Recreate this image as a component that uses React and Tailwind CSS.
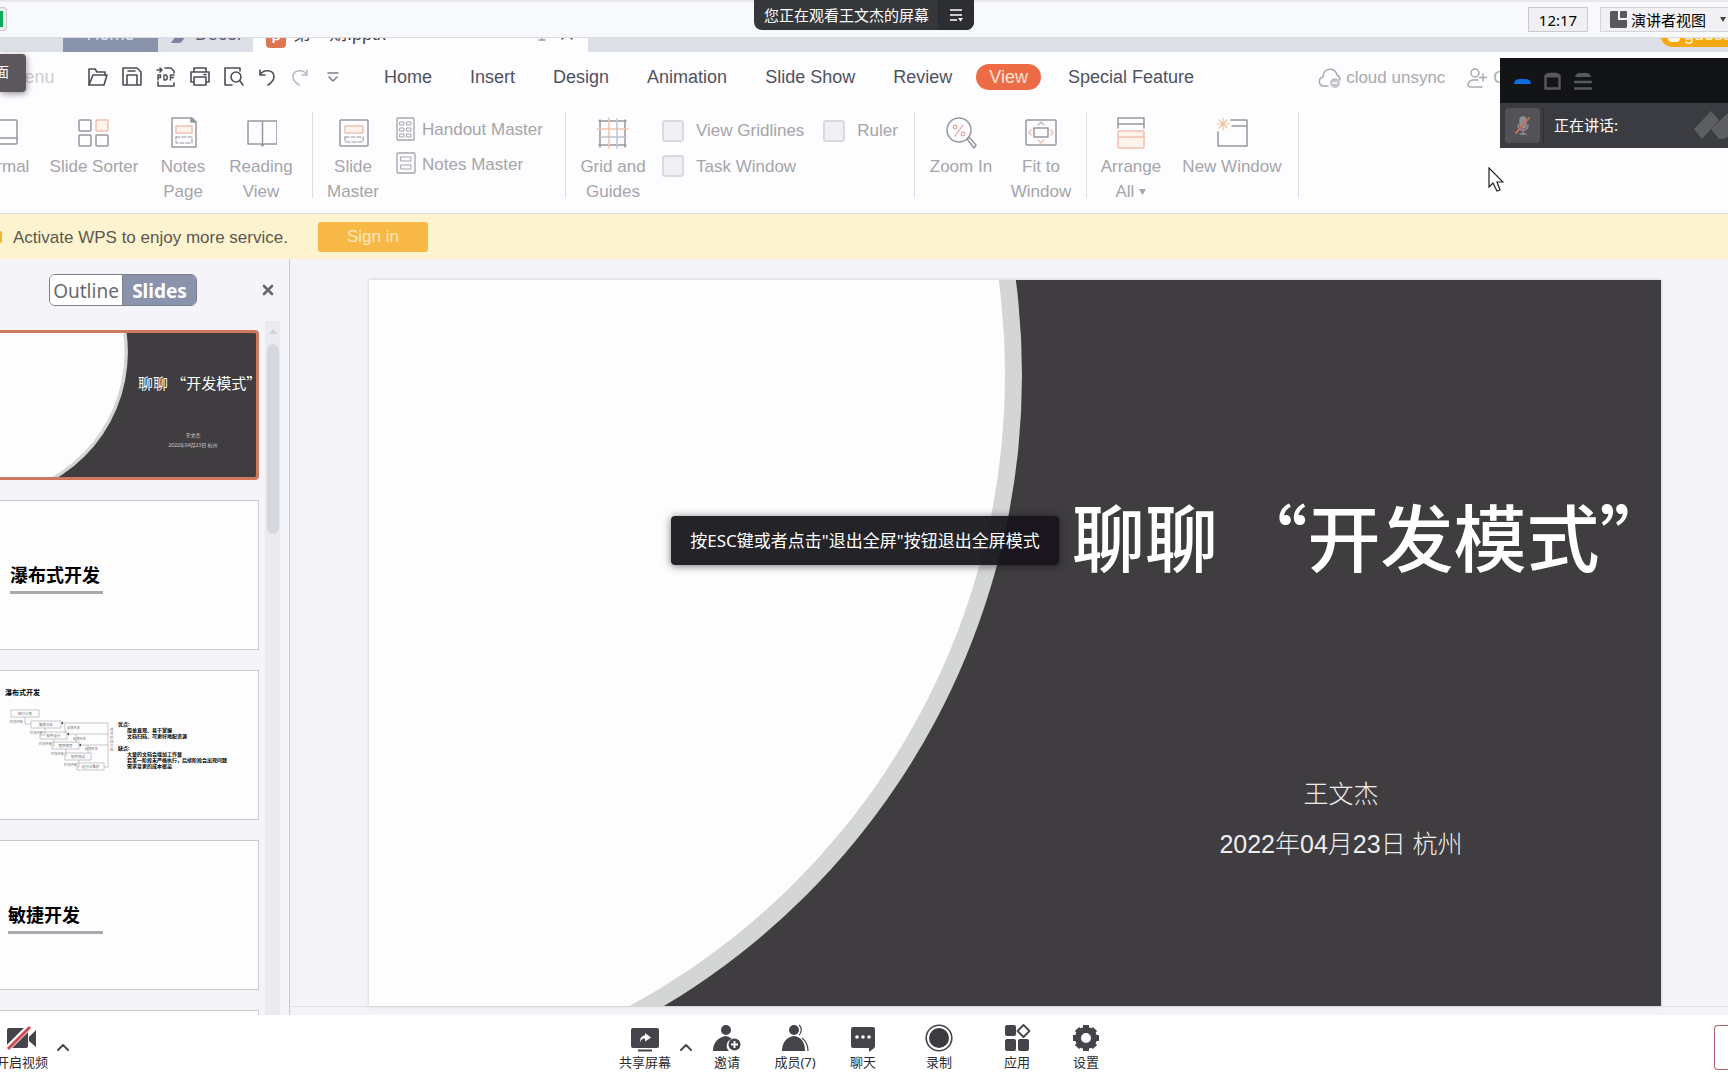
import React from "react";

const sans = "font-['Liberation_Sans','Noto_Sans_CJK_SC',sans-serif]";
const cjk = "font-['Noto_Sans','Noto_Sans_CJK_SC',sans-serif]";
const cjkOnly = "font-['Noto_Sans_CJK_SC',sans-serif]";

const MENU_ITEMS = ["Home", "Insert", "Design", "Animation", "Slide Show", "Review", "View", "Special Feature"];

function Svg({ w = 20, h = 20, sw = 1.6, className = "", children }) {
  return (
    <svg width={w} height={h} viewBox={`0 0 ${w} ${h}`} fill="none" stroke="currentColor" strokeWidth={sw} strokeLinejoin="round" strokeLinecap="round" className={className} aria-hidden="true">
      {children}
    </svg>
  );
}

/* ---------- meeting header ---------- */

function MeetingHeader() {
  return (
    <header className={`relative flex h-[38px] shrink-0 items-start justify-end gap-3 border-t-2 border-b border-t-[#e9e7ec] border-b-[#dcdce0] bg-[#f8f9fc] pt-[5px] ${cjk}`}>
      <div className="absolute top-[5px] left-0 flex h-6 w-[7px] items-center rounded-r-sm border border-l-0 border-[#c9cace] bg-[#eeeef1]">
        <span className="h-4 w-[3px] bg-[#0cab5c]" />
      </div>
      <div className="absolute -top-0.5 left-[754px] flex h-[30px] w-[220px] items-center overflow-hidden rounded-b-lg bg-[#35373b] text-[15px] leading-5 text-white">
        <span className="flex-1 pl-2.5 whitespace-nowrap">您正在观看王文杰的屏幕</span>
        <button aria-label="选项" className="flex h-full w-9 items-center justify-center bg-[#2c2e32]">
          <Svg w={14} h={14} sw={1.5}>
            <path d="M1 2h12M1 7h12M1 12h7" strokeLinecap="butt" />
            <path d="M9 10h5l-2.500 3.500z" fill="currentColor" stroke="none" />
          </Svg>
        </button>
      </div>
      <time className="flex h-[25px] w-[60px] items-center justify-center border border-[#c9cace] bg-[#f0f0f3] text-[15px] leading-5 text-black">12:17</time>
      <button className="flex h-[25px] w-32 items-center gap-1 border border-r-0 border-[#d4d5d9] bg-[#f1f1f4] pl-[9px] text-[15px] leading-5 whitespace-nowrap text-black">
        <svg width="17" height="17" viewBox="0 0 17 17" fill="#58595d" aria-hidden="true">
          <path d="M1 0h7v9h9v7l-1 1H1l-1-1V1z" />
          <rect x="10" y="0" width="7" height="7" rx="1" />
        </svg>
        <span>演讲者视图</span>
        <svg width="7" height="5" viewBox="0 0 7 5" fill="#444" className="ml-2.5 shrink-0" aria-hidden="true"><path d="M0 0h6L3 5z" /></svg>
      </button>
    </header>
  );
}

/* ---------- WPS document tabs ---------- */

function TabStrip() {
  return (
    <div className={`flex h-[14px] shrink-0 items-end overflow-hidden bg-[#dcdfe6] text-lg ${sans}`}>
      <div className="flex h-9 w-full items-stretch leading-9">
        <button className="ml-[63px] w-[95px] bg-[#8a93ac] text-center text-[#e3e5ee]">Home</button>
        <button className="flex w-[95px] items-center gap-2 pl-[13px] text-[#5b6075]">
          <svg width="16" height="18" viewBox="0 0 16 18" fill="#7c83a0" aria-hidden="true"><path d="M4 0h6q10 9-1 18H0l4-6z" /></svg>
          <span>Docer</span>
        </button>
        <button className="flex w-[335px] items-center bg-[#fdfcfe] pl-[13px] text-[#45454f]">
          <span className="mt-2 flex h-5 w-5 items-center justify-center rounded-sm bg-[#dd7650] text-[13px] leading-none font-bold text-white">P</span>
          <span className="ml-[7px] flex-1 text-left">第一期.pptx</span>
          <Svg w={14} h={14} sw={1.3} className="mr-3 text-[#9a9aa2]"><path d="M1 1h12v8H1zM7 9v4M4 13h6" /></Svg>
          <Svg w={12} h={12} sw={1.6} className="mr-[15px] text-[#5b5b64]"><path d="M1 1l10 10M11 1L1 11" /></Svg>
        </button>
        <button className="pl-[19px] text-[#6b6b75]" aria-label="New tab">+</button>
        <button className="mt-[5px] ml-auto flex h-[26px] w-[68px] items-center gap-1 rounded-l-full bg-[#f7a910] pl-2 leading-6 text-[#fff6df]">
          <span className="h-4 w-[14px] rounded-b bg-[#fff6df]" />guest
        </button>
      </div>
    </div>
  );
}

/* ---------- quick access + menu ---------- */

const QUICK = [
  ["Open", "text-[#4c4d57]", <><path d="M1 18V2h6l2 3h8v3" /><path d="M1 18L5 8h14l-3 10z" /></>],
  ["Save", "text-[#4c4d57]", <><path d="M1 1h14l4 4v13H1zM5 18V8h10v10M6 4h7" /></>],
  ["Export PDF", "text-[#4c4d57]", <><path d="M9 1h6l3 3v2M2 15v4h16v-3M1 3h5M4 1l2 2-2 2" /><path d="M2 13V8h2.500v2.500H2M8 8h1c3 0 3 5 0 5H8zM14.500 13V8H18M14.500 10.500h3" strokeWidth="1.400" /></>],
  ["Print", "text-[#4c4d57]", <><path d="M4 5V1h12v4M4 15H1V5h18v10h-3" /><path d="M4 10h12v8H4zM14 7.500h2" /></>],
  ["Preview", "text-[#4c4d57]", <><path d="M8 18H1V1h15v3" /><circle cx="12" cy="10" r="5" /><path d="M16 14l3 4" /></>],
  ["Undo", "text-[#4c4d57]", <><path d="M2 3v5h5M2 8c3-6 14-6 14 2 0 3-3 6-6 8" /></>],
  ["Redo", "text-[#b9b9c0]", <><path d="M15 3v5h-5M15 8C12 2 1 2 1 10c0 3 3 6 6 8" /></>],
  ["More", "text-[#7f7f88]", <><path d="M2 6h10M3 10l4 4 4-4" /></>],
];

function MenuBar() {
  return (
    <div className={`flex h-[50px] shrink-0 items-center overflow-hidden pl-2 text-lg text-[#50525f] ${sans}`}>
      <button className="w-12 text-[#cfcdd2]">Menu</button>
      <div className="ml-8 flex shrink-0 items-center gap-[14px]">
        {QUICK.map(([name, color, icon]) => (
          <button key={name} aria-label={name} className={`h-5 w-5 ${color}`}><Svg>{icon}</Svg></button>
        ))}
      </div>
      <nav className="ml-[38px] flex shrink-0 items-center gap-[38px] whitespace-nowrap">
        {MENU_ITEMS.map((m) => (
          <button key={m} className={m === "View" ? "-mr-[11px] -ml-[14px] h-[26px] rounded-full bg-[#ee6c45] px-[13px] leading-[26px] text-[#fde3d8]" : ""}>{m}</button>
        ))}
      </nav>
      <div className="ml-auto flex shrink-0 items-center pt-0.5 pr-[194px] text-[17px] whitespace-nowrap text-[#a9a9ae]">
        <button className="flex items-center gap-1">
          <Svg w={24} h={22} sw={1.5}>
            <path d="M10 19H6C0 19 0 11 5 10 5 0 18 0 19 8c2 1 3 3 3 5" />
            <circle cx="17" cy="16" r="5" fill="#c6c6ca" stroke="none" /><path d="M15 16h4" stroke="#fff" />
          </Svg>
          cloud unsync
        </button>
        <button className="ml-[22px] flex items-center gap-1.5">
          <Svg w={20} h={22} sw={1.5}><circle cx="8" cy="6" r="4" /><path d="M11 13H6c-3 0-5 3-5 5 0 2 1 2 3 2h11M16 7v7M12.500 10.500h7" /></Svg>
          Coop
        </button>
      </div>
    </div>
  );
}

/* ---------- ribbon ---------- */

const P = "#f0c2ae";
const PF = "#fff3ec";
const ICONS = {
  normal: <><rect x="1" y="3" width="30" height="24" rx="1" /><path d="M1 21h30" /></>,
  sorter: <><rect x="1" y="3" width="12" height="11" rx="1" /><rect x="18" y="3" width="12" height="11" rx="1" stroke={P} fill={PF} /><rect x="1" y="18" width="12" height="11" rx="1" /><rect x="18" y="18" width="12" height="11" rx="1" /></>,
  notes: <><path d="M5 1h20l4 4v25H5z" /><path d="M24 1v4h5z" fill="currentColor" /><rect x="9" y="9" width="16" height="7" stroke={P} fill={PF} /><rect x="9" y="20" width="16" height="6" strokeDasharray="4 2" strokeWidth="1" /></>,
  reading: <><path d="M3 4h29v23H19l-1.500 2-1.500-2H3zM17.500 4v23" /></>,
  master: <><rect x="3" y="3" width="28" height="26" rx="1" /><rect x="8" y="9" width="18" height="7" stroke={P} fill={PF} /><rect x="8" y="20" width="18" height="5" strokeDasharray="4 2" strokeWidth="1" /></>,
  grid: <><path d="M2 4h27M2 28h27M3 3v27M28 3v27" /><path d="M0 12h31M12 1v30" stroke={P} /><path d="M2 20h27M20 2v29" stroke="#bfc3cf" /></>,
  zoom: <><circle cx="14" cy="13" r="12" /><path d="M22 22l2-2 7 8-2 3z" /><g stroke="#e3a79a" strokeWidth="1.200"><path d="M18 8l-8 11" /><circle cx="10" cy="10" r="1.800" /><circle cx="18" cy="17" r="1.800" /></g></>,
  fit: <><rect x="1" y="3" width="30" height="25" rx="1" /><rect x="9" y="11" width="14" height="9" /><path d="M13 8l3-3 3 3" stroke="#bfc3cf" /><path d="M13 23l3 3 3-3M6 13l-2 2.500L6 18M26 13l2 2.500-2 2.500" stroke={P} /></>,
  arrange: <><path d="M3 11V1h26v10M3 7h26" /><g stroke={P} fill={PF}><rect x="3" y="14" width="26" height="17" rx="1" /><path d="M3 20h26" /></g></>,
  window: <><path d="M15 3h16v26H2V15M16 9h15" /><path d="M7 1v12M1 7h12M3 3l8 8M11 3l-8 8" stroke="#eec3a4" strokeWidth="1.200" /></>,
};

function RibbonButton({ icon, lines, caret, className }) {
  return (
    <button className={`flex shrink-0 flex-col items-center whitespace-nowrap ${className}`}>
      <Svg w={32} h={32} sw={1.5} className="mt-[5px] text-[#97979e]">{ICONS[icon]}</Svg>
      <span className="mt-[5px] leading-[25px]">
        {lines.map((l, i) => (
          <span key={l} className="flex items-center justify-center gap-[5px]">
            {l}
            {caret && i === lines.length - 1 && <svg width="7" height="6" viewBox="0 0 7 6" fill="#a5a5aa" aria-hidden="true"><path d="M0 0h7L3.500 6z" /></svg>}
          </span>
        ))}
      </span>
    </button>
  );
}

const Divider = ({ className }) => <span className={`h-[86px] w-px shrink-0 bg-[#dddde1] ${className}`} />;

function Check({ label }) {
  return (
    <label className="flex items-center gap-3 whitespace-nowrap">
      <input type="checkbox" className="h-[22px] w-[22px] appearance-none rounded-[3px] border-2 border-[#dad9e0] bg-[#f1eff6]" />
      {label}
    </label>
  );
}

function Ribbon() {
  return (
    <div className={`flex h-[112px] shrink-0 items-start overflow-hidden border-b border-[#dcdbdc] pt-[10px] text-[17px] text-[#a5a5aa] ${sans}`}>
      <RibbonButton icon="normal" lines={["Normal"]} className="-ml-[26px] w-14" />
      <RibbonButton icon="sorter" lines={["Slide Sorter"]} className="ml-[14px] w-[100px]" />
      <RibbonButton icon="notes" lines={["Notes", "Page"]} className="w-[78px]" />
      <RibbonButton icon="reading" lines={["Reading", "View"]} className="w-[78px]" />
      <Divider className="ml-3" />
      <RibbonButton icon="master" lines={["Slide", "Master"]} className="ml-[11px] w-[58px]" />
      <div className="ml-[14px] flex w-[169px] shrink-0 flex-col items-start gap-[9px] pt-[5px] whitespace-nowrap">
        <button className="flex items-center gap-1.5">
          <Svg w={20} h={26} sw={1.3}><rect x="1" y="1" width="17" height="22" rx="1" /><g strokeWidth="1"><rect x="4" y="5" width="4" height="3" /><rect x="11" y="5" width="4" height="3" /><rect x="4" y="11" width="4" height="3" /><rect x="11" y="11" width="4" height="3" /><rect x="4" y="17" width="4" height="3" /><rect x="11" y="17" width="4" height="3" /></g></Svg>
          Handout Master
        </button>
        <button className="flex items-center gap-1.5">
          <Svg w={20} h={26} sw={1.3}><rect x="1" y="1" width="18" height="20" rx="1" /><g strokeWidth="1"><rect x="5" y="5" width="10" height="4" /><rect x="5" y="13" width="10" height="4" /></g></Svg>
          Notes Master
        </button>
      </div>
      <Divider />
      <RibbonButton icon="grid" lines={["Grid and", "Guides"]} className="ml-[10px] w-[74px]" />
      <div className="ml-3 flex shrink-0 items-start gap-[19px] pt-1.5">
        <div className="flex flex-col gap-[10px]"><Check label="View Gridlines" /><Check label="Task Window" /></div>
        <Check label="Ruler" />
      </div>
      <Divider className="ml-4" />
      <RibbonButton icon="zoom" lines={["Zoom In"]} className="ml-[11px] w-[70px]" />
      <RibbonButton icon="fit" lines={["Fit to", "Window"]} className="ml-[10px] w-[70px]" />
      <Divider className="ml-[10px]" />
      <RibbonButton icon="arrange" lines={["Arrange", "All"]} caret className="ml-[9px] w-[70px]" />
      <RibbonButton icon="window" lines={["New Window"]} className="ml-[14px] w-[104px]" />
      <Divider className="ml-[14px]" />
    </div>
  );
}

function ActivateBanner() {
  return (
    <div className={`flex h-[45px] shrink-0 items-center bg-[#fdf4cf] text-[17px] text-[#5c574f] ${sans}`}>
      <span className="h-3 w-[2px] rounded-r bg-[#eeb43c]" />
      <span className="ml-[11px] w-[305px] pt-0.5 whitespace-nowrap">Activate WPS to enjoy more service.</span>
      <button className="h-[30px] w-[110px] rounded-[3px] bg-[#f7b845] text-[#fde9bd]">Sign in</button>
    </div>
  );
}

/* ---------- slides ---------- */

function CoverArt() {
  return (
    <svg viewBox="0 0 1292 726" preserveAspectRatio="xMinYMin slice" className="absolute inset-0 h-full w-full" aria-hidden="true">
      <rect width="1292" height="726" fill="#403d40" />
      <circle cx="-82" cy="95" r="735" fill="#d4d6d5" />
      <circle cx="-82" cy="95" r="718" fill="#fdfdfe" />
    </svg>
  );
}

const STEPS = [
  [11, 39, 28, "制订计划"],
  [31, 50, 30, "需求分析"],
  [40, 61, 27, "软件设计"],
  [52, 71, 27, "程序编写"],
  [65, 82, 26, "软件测试"],
  [77, 92, 27, "运行与维护"],
];

function WaterfallDiagram() {
  return (
    <svg width="118" height="149" viewBox="0 0 118 149" fill="none" stroke="#a5a5aa" strokeWidth="0.600" className="absolute top-0 left-0" aria-label="瀑布模型">
      {STEPS.map(([x, y, w, t], i) => (
        <g key={t}>
          <rect x={x} y={y} width={w} height="7" />
          <text x={x + w / 2} y={y + 5} fontSize="3.500" textAnchor="middle" fill="#666" stroke="none">{t}</text>
          {i < 5 && <path d={`M${x + 14} ${y + 7}v7h${STEPS[i + 1][0] - x - 14}`} />}
          {i < 5 && <text x={x - 1} y={y + 13} fontSize="3.200" fill="#777" stroke="none">阶段评审</text>}
          {i > 0 && i < 4 && <text x={x + w + 6} y={y + 8} fontSize="3.200" fill="#777" stroke="none">反馈改进</text>}
        </g>
      ))}
      <path d="M61 52h47v44h-4M67 63h41M79 74h29M65 53v9M76 63v9M88 74v8" />
      <path d="M63 50.500v3l-2-1.500zM69 61.500v3l-2-1.500zM81 72.500v3l-2-1.500z" fill="#444" stroke="none" />
      {[..."修改阶段文档"].map((c, i) => (
        <text key={c} x="110" y={60 + i * 4} fontSize="3.500" fill="#777" stroke="none">{c}</text>
      ))}
    </svg>
  );
}

const thumb = "relative h-[150px] w-[259px] shrink-0 overflow-hidden border border-l-0 border-[#c9c9d0] bg-[#fdfdfe] text-left text-black";

function Sidebar() {
  return (
    <aside className={`flex w-[290px] shrink-0 flex-col border-r border-[#c9c9d0] bg-[#f4f4f9] ${cjk}`}>
      <div className="flex h-[62px] shrink-0 items-center justify-between pr-[15px] pl-[49px]">
        <div className="flex h-8 w-[148px] overflow-hidden rounded-md border border-[#7d7e88] text-[19px] leading-8">
          <button className="flex w-[72px] justify-center bg-white text-[#6a6a70]">Outline</button>
          <button className="flex-1 border-l border-[#7d7e88] bg-[#8a93ac] font-bold text-white">Slides</button>
        </div>
        <button aria-label="Close"><Svg w={12} h={12} sw={2.6} className="text-[#66666e]"><path d="M2 2l8 8M10 2L2 10" /></Svg></button>
      </div>
      <div className="flex min-h-0 flex-1 overflow-hidden">
        <div className="flex w-[259px] flex-col gap-5 overflow-hidden pt-[9px]">
          <button className="relative h-[150px] w-[259px] shrink-0 overflow-hidden rounded-r-sm border-3 border-l-0 border-[#cf7860] text-white">
            <span className="absolute inset-y-0 right-0 -left-[3px] block"><CoverArt /></span>
            <span className="relative flex h-full w-full flex-col pt-[38px]">
              <span className={`pl-[138px] text-left text-[15px] leading-6 whitespace-nowrap ${cjkOnly}`}>聊聊 “开发模式”</span>
              <span className="mt-[35px] pl-[130px] text-center text-[5px] leading-[10px] text-[#cfcdd0]">王文杰<br />2022年04月23日 杭州</span>
            </span>
          </button>
          <button className={`${thumb} flex items-center pl-[10px]`}>
            <span className="w-[93px] border-b-3 border-[#aaa8ae] pt-1 pb-0.5 text-[18px] leading-7 font-bold whitespace-nowrap">瀑布式开发</span>
          </button>
          <button className={thumb}>
            <WaterfallDiagram />
            <span className="flex h-full flex-col text-[5px] leading-[6px] font-bold">
              <span className="pt-[18px] pl-[5px] text-[7px] leading-2">瀑布式开发</span>
              <span className="mt-6 pl-[118px]">优点:</span>
              <span className="pl-[127px] whitespace-nowrap">简单直观、易于掌握<br />文档归档、可更好地配资源</span>
              <span className="mt-1.5 pl-[118px]">缺点:</span>
              <span className="pl-[127px] whitespace-nowrap">大量的文档会增加工作量<br />若某一阶段未严格执行，后续阶段会出现问题<br />需求变更的成本很高</span>
            </span>
          </button>
          <button className={`${thumb} flex items-center pl-[8px]`}>
            <span className="w-[95px] border-b-3 border-[#aaa8ae] pt-1 pb-0.5 text-[18px] leading-7 font-bold whitespace-nowrap">敏捷开发</span>
          </button>
          <button className={thumb} aria-label="Slide 5" />
        </div>
        <div className="ml-1.5 flex w-[15px] flex-col items-center bg-[#e9ebf1] pt-2">
          <svg width="8" height="5" viewBox="0 0 8 5" fill="#cfd3d8" aria-hidden="true"><path d="M0 5l4-5 4 5z" /></svg>
          <span className="mt-[10px] h-[190px] w-3 rounded-full bg-[#d5d8de]" />
        </div>
      </div>
    </aside>
  );
}

function Stage() {
  return (
    <main className={`flex min-w-0 flex-1 flex-col bg-[#f3f3f8] ${cjk}`}>
      <section className="relative mt-[21px] mr-[67px] ml-[79px] flex-1 overflow-hidden text-white shadow-[0_0_3px_#c5c5cc]">
        <CoverArt />
        <div className="relative flex h-full flex-col">
          <h1 className={`pt-[206px] pl-[703px] text-[73px] leading-[96px] font-medium whitespace-nowrap ${cjkOnly}`}>聊聊 “开发模式”</h1>
          <div className={`mt-[187px] w-full pl-[652px] text-center text-[25px] leading-[50px] font-light text-[#efedf0] ${sans}`}>
            <p>王文杰</p>
            <p>2022年04月23日 杭州</p>
          </div>
        </div>
      </section>
      <div className="h-[9px] shrink-0 border-t border-[#dfdfe5]" />
    </main>
  );
}

/* ---------- meeting toolbar ---------- */

const TOOLS = [
  ["邀请", "w-14", <svg width="28" height="28" viewBox="0 0 28 28" fill="#45444a"><circle cx="13" cy="6" r="5" /><path d="M0 27C0 18 6 13 13 12c3 1 5 2 6 3a7 7 0 0 0-3 12z" /><circle cx="21.500" cy="20.500" r="6" /><path d="M18 20.500h7M21.500 17v7" stroke="#fff" strokeWidth="2" /></svg>],
  ["成员(7)", "w-20", <svg width="28" height="28" viewBox="0 0 28 28" fill="#45444a"><circle cx="13" cy="6" r="5" /><path d="M1 27C1 18 6 13 13 12c7 1 11 6 11 15z" /><path d="M18 1c3 2 3 8 0 10M21 14c4 3 6 7 6 13" fill="none" stroke="#45444a" strokeWidth="1.200" /></svg>],
  ["聊天", "w-14", <svg width="28" height="28" viewBox="0 0 28 28" fill="#45444a"><path d="M4 3h20q2 0 2 2v17q0 2-2 3l-4 3v-4H4q-2 0-2-2V5q0-2 2-2z" /><g fill="#fff"><circle cx="8" cy="13" r="1.800" /><circle cx="14" cy="13" r="1.800" /><circle cx="20" cy="13" r="1.800" /></g></svg>],
  ["录制", "w-24", <svg width="28" height="28" viewBox="0 0 28 28"><circle cx="14" cy="14" r="12.800" fill="none" stroke="#45444a" strokeWidth="1.600" /><circle cx="14" cy="14" r="10" fill="#3b3b40" /></svg>],
  ["应用", "w-[60px]", <svg width="28" height="28" viewBox="0 0 28 28" fill="#45444a"><rect x="2" y="1" width="11" height="11" rx="2" /><rect x="2" y="15" width="11" height="12" rx="2" /><rect x="15" y="15" width="11" height="12" rx="2" /><path d="M20.500 1l6 6-6 6-6-6z" fill="none" stroke="#45444a" strokeWidth="1.800" strokeLinejoin="round" /></svg>],
  ["设置", "w-[78px]", <svg width="28" height="28" viewBox="0 0 28 28" fill="none" stroke="#45444a"><circle cx="14" cy="14" r="8" strokeWidth="6" /><g strokeWidth="6"><path d="M14 1v5M14 22v5M1 14h5M22 14h5M5 5l3 3M20 20l3 3M23 5l-3 3M8 20l-3 3" /></g></svg>],
];

const Chevron = () => <Svg w={12} h={8} sw={2} className="text-[#4a4a50]"><path d="M1 7l5-5 5 5" /></Svg>;

function MeetingToolbar() {
  return (
    <footer className={`flex h-[65px] shrink-0 items-start overflow-hidden bg-white pt-[9px] text-[13px] leading-5 whitespace-nowrap text-[#2b2b30] ${cjk}`}>
      <div className="flex flex-1 items-start">
        <button className="-ml-1 flex w-[52px] flex-col items-center">
          <svg width="32" height="28" viewBox="0 0 32 28" fill="#45444a" aria-hidden="true">
            <rect x="1" y="4" width="21" height="20" rx="2" /><path d="M23 13l7-7v17l-7-6z" /><path d="M2 24L23 3" stroke="#fff" strokeWidth="6" /><path d="M2 25L24 3" stroke="#d5474f" strokeWidth="3" />
          </svg>
          开启视频
        </button>
        <button className="ml-[9px] pt-[19px] leading-none" aria-label="视频选项"><Chevron /></button>
      </div>
      <div className="flex items-start pl-[15px]">
        <button className="flex w-[54px] flex-col items-center">
          <svg width="32" height="28" viewBox="0 0 32 28" aria-hidden="true">
            <rect x="2" y="4" width="28" height="20" rx="2" fill="#45444a" /><path d="M9 26.500h14" stroke="#45444a" strokeWidth="2" />
            <path d="M16 9l6 4.500-6 4v-3c-3 0-4 1-5 4 0-5 2-7 5-7z" fill="#fff" />
          </svg>
          共享屏幕
        </button>
        <button className="flex w-[27px] justify-center pt-[19px]" aria-label="共享选项"><Chevron /></button>
        {TOOLS.map(([label, width, icon]) => (
          <button key={label} className={`flex flex-col items-center ${width}`}>{icon}{label}</button>
        ))}
      </div>
      <div className="flex flex-1 justify-end">
        <button aria-label="离开会议" className="mt-px h-[45px] w-[14px] rounded-l border border-r-0 border-[#b0606c]" />
      </div>
    </footer>
  );
}

/* ---------- floating layers ---------- */

function SpeakerPanel() {
  return (
    <div className={`absolute top-[58px] right-0 w-[228px] text-white ${cjk}`}>
      <div className="flex h-[45px] items-center gap-[13px] bg-[#131416] pl-[14px] text-[#58595c]">
        <svg width="17" height="18" viewBox="0 0 17 18" aria-hidden="true"><path d="M0 12q0-5 6-5h5q6 0 6 5z" fill="#0f6be0" /></svg>
        <Svg w={17} h={18} sw={2.4}><path d="M1.500 4v12.500h14V4q-2-2-4-2h-6q-2 0-4 2z" strokeLinejoin="miter" /><path d="M2 4h13" strokeWidth="3" /></Svg>
        <Svg w={18} h={18} sw={2.4}><path d="M1 5q1-4 5-4h6q4 0 5 4z" fill="currentColor" stroke="none" /><path d="M1 10h16M1 16.500h16" /></Svg>
      </div>
      <div className="flex h-[45px] items-center overflow-hidden bg-[#3b3c41] pl-[5px] text-[15px]">
        <button aria-label="静音" className="flex h-[35px] w-[35px] items-center justify-center rounded bg-[#535256]">
          <Svg w={20} h={22} sw={1.4} className="text-[#8f8f94]">
            <rect x="7" y="2" width="6" height="11" rx="3" fill="currentColor" /><path d="M5 10c0 7 10 7 10 0M10 16v3M7 19h6" /><path d="M3 18L16 3" stroke="#c5695a" strokeWidth="2" />
          </Svg>
        </button>
        <span className="ml-[3px] h-[35px] w-px bg-[#2f3034]" />
        <span className="ml-2.5 flex-1">正在讲话:</span>
        <svg width="34" height="30" viewBox="0 0 34 30" fill="#5d5e61" aria-hidden="true"><path d="M0 18L17 0l8 9L8 28zM17 18L34 2v24l-5 2h-4z" /></svg>
      </div>
    </div>
  );
}

export default function App() {
  return (
    <div className="relative flex h-screen w-full flex-col overflow-hidden bg-[#fdfcfe]">
      <MeetingHeader />
      <TabStrip />
      <MenuBar />
      <Ribbon />
      <ActivateBanner />
      <div className="flex min-h-0 flex-1">
        <Sidebar />
        <Stage />
      </div>
      <MeetingToolbar />

      <div className={`absolute top-[54px] left-0 h-[38px] w-[26px] overflow-hidden rounded-r-sm bg-[#5b575c] text-sm leading-[36px] text-white shadow-[1px_2px_6px_#0006] ${cjk}`}>
        <span className="-ml-[5px]">面</span>
      </div>
      <SpeakerPanel />
      <div role="status" className={`absolute top-[516px] left-[671px] flex h-[49px] w-[388px] items-center justify-center rounded-sm bg-[#16151bf0] text-[17px] whitespace-nowrap text-white shadow-[0_1px_8px_#0008] ${cjk}`}>
        按ESC键或者点击"退出全屏"按钮退出全屏模式
      </div>
      <svg width="16" height="25" viewBox="0 0 16 25" className="absolute top-[167px] left-[1488px]" aria-hidden="true">
        <path d="M1 1v19l4-4 4 8 3-1-3-8h6z" fill="#fff" stroke="#222" strokeWidth="1.200" />
      </svg>
    </div>
  );
}
